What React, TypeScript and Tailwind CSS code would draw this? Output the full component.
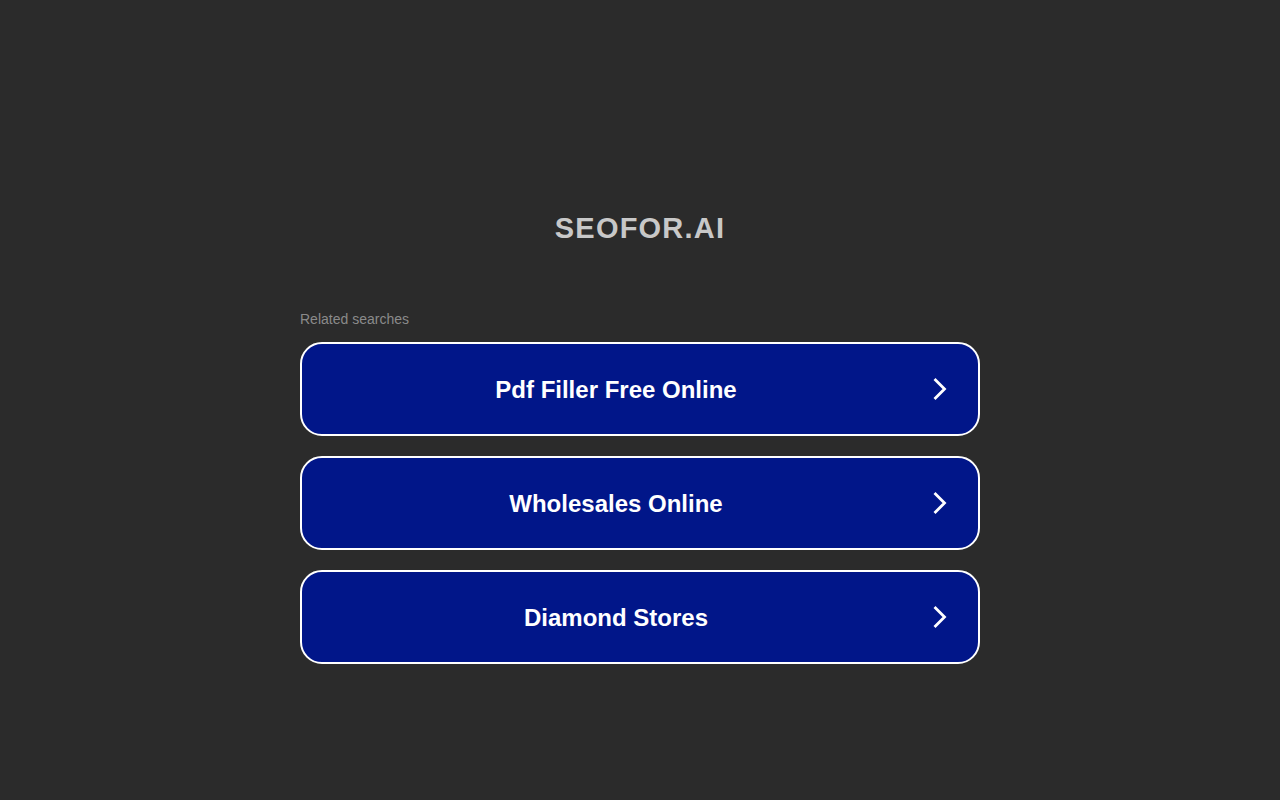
import React from "react";

const items = ["Pdf Filler Free Online", "Wholesales Online", "Diamond Stores"];

function Chevron() {
  return (
    <svg width="14" height="22" viewBox="0 0 14 22" fill="none" className="shrink-0">
      <path d="M2.5 2 L11.5 11 L2.5 20" stroke="white" strokeWidth="2.8" strokeLinecap="square" strokeLinejoin="miter" />
    </svg>
  );
}

export default function App() {
  return (
    <div className="min-h-[800px] w-full bg-[#2b2b2b] flex flex-col items-center" style={{ fontFamily: '"Liberation Sans", Arial, sans-serif' }}>
      <h1 className="mt-[209px] text-[29px] leading-[38px] font-bold text-[#c8c8c8] tracking-[1.2px]">SEOFOR.AI</h1>
      <div className="mt-[63px] w-[680px] flex flex-col">
        <div className="text-[14px] leading-[18px] text-[#8a8a8a] mb-[14px]">Related searches</div>
        <div className="flex flex-col gap-[20px]">
          {items.map((t) => (
            <div key={t} className="h-[94px] rounded-[22px] border-2 border-white bg-[#011689] flex items-center">
              <span className="flex-1 pt-[2px] text-center text-[24px] font-bold text-white">{t}</span>
              <div className="ml-[3px] mr-[31px] flex"><Chevron /></div>
            </div>
          ))}
        </div>
      </div>
    </div>
  );
}
